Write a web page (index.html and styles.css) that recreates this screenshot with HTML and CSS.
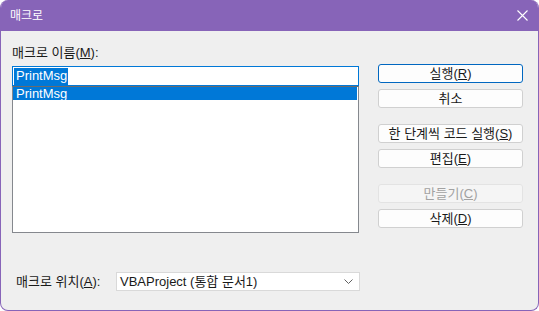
FILE: index.html
```html
<!DOCTYPE html>
<html>
<head>
<title>매크로</title>
<link rel="stylesheet" href="styles.css">
</head>
<body>
<div class="window">
    <div class="titlebar">
        <span class="title">매크로</span>
        <svg class="close" width="11" height="11" viewBox="0 0 11 11">
            <path d="M0.5 0.5 L10.5 10.5 M10.5 0.5 L0.5 10.5" stroke="#ffffff" stroke-width="1.1" fill="none"/>
        </svg>
    </div>
    <div class="content">
        <div class="main">
            <div class="left">
                <div class="label">매크로 이름(<u>M</u>):</div>
                <div class="namebox"><span class="sel">PrintMsg</span></div>
                <div class="listbox">
                    <div class="item selected">PrintMsg</div>
                </div>
            </div>
            <div class="buttons">
                <div class="btn default">실행(<u>R</u>)</div>
                <div class="btn">취소</div>
                <div class="btn spaced">한 단계씩 코드 실행(<u>S</u>)</div>
                <div class="btn">편집(<u>E</u>)</div>
                <div class="btn spaced disabled">만들기(<u>C</u>)</div>
                <div class="btn">삭제(<u>D</u>)</div>
            </div>
        </div>
        <div class="where">
            <div class="where-label">매크로 위치(<u>A</u>):</div>
            <div class="combo">
                <span>VBAProject (통합 문서1)</span>
                <svg width="9" height="6" viewBox="0 0 9 6">
                    <path d="M0.5 0.5 L4.5 4.5 L8.5 0.5" stroke="#606060" stroke-width="1" fill="none"/>
                </svg>
            </div>
        </div>
    </div>
</div>
</body>
</html>
```

FILE: styles.css
```css
* {
    box-sizing: border-box;
}
body {
    margin: 0;
    background: #ffffff;
    font-family: "Liberation Sans", "Noto Sans CJK KR", sans-serif;
    font-size: 13px;
    color: #1a1a1a;
}
u {
    text-decoration: underline;
    text-underline-offset: 1px;
}
.window {
    width: 539px;
    height: 311px;
    background: #efefef;
    border: 1px solid #8764b8;
    border-top: none;
    border-radius: 8px;
    overflow: hidden;
    display: flex;
    flex-direction: column;
}
.titlebar {
    height: 31px;
    background: #8764b8;
    display: flex;
    align-items: center;
    justify-content: space-between;
    padding: 0 10px 0 9px;
    color: #ffffff;
}
.title {
    font-size: 12px;
    line-height: 16px;
}
.close {
    display: block;
}
.content {
    padding: 14px 15px 0 11px;
}
.main {
    display: flex;
    justify-content: space-between;
}
.left {
    width: 347px;
}
.label {
    height: 16px;
    line-height: 16px;
    margin-bottom: 5px;
}
.namebox {
    height: 20px;
    background: #ffffff;
    border: 1px solid #0078d7;
    padding: 1px 0 0 1px;
    line-height: 16px;
}
.sel {
    display: inline-block;
    background: #0078d7;
    color: #ffffff;
    padding: 0 1px 0 2px;
    height: 17px;
}
.listbox {
    height: 147px;
    background: #ffffff;
    border: 1px solid #85888e;
    border-top-color: #6b6b6b;
}
.item {
    height: 13px;
    line-height: 13px;
    padding-left: 3px;
}
.item.selected {
    background: #0078d7;
    color: #ffffff;
    margin-right: 1px;
}
.buttons {
    width: 145px;
    padding-top: 19px;
    display: flex;
    flex-direction: column;
}
.btn {
    height: 19px;
    line-height: 17px;
    text-align: center;
    background: #fdfdfd;
    border: 1px solid #d0d0d0;
    border-radius: 3px;
    margin-bottom: 6px;
}
.btn.default {
    border-color: #0067c0;
}
.btn.spaced {
    margin-top: 10px;
}
.btn.disabled {
    background: #f5f5f5;
    border-color: #e3e3e3;
    color: #a2a2a2;
}
.where {
    margin-top: 38px;
    display: flex;
    align-items: center;
}
.where-label {
    width: 104px;
    padding-left: 4px;
    line-height: 16px;
}
.combo {
    width: 244px;
    height: 19px;
    background: #ffffff;
    border: 1px solid #d9d9d9;
    display: flex;
    align-items: center;
    justify-content: space-between;
    padding: 0 6px 0 3px;
    line-height: 16px;
}
.combo svg {
    display: block;
}
```
